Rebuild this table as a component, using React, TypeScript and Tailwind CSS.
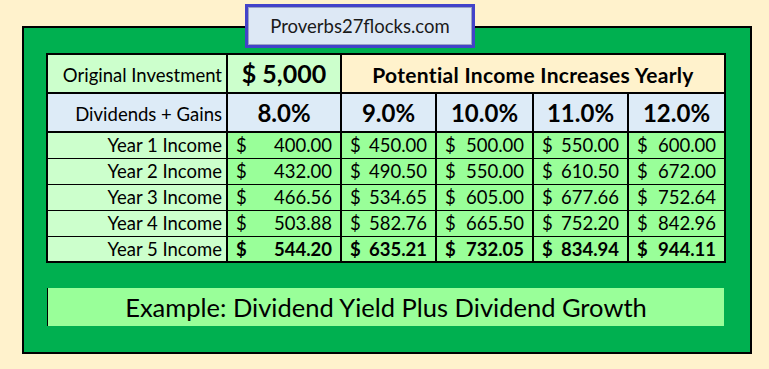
import React from 'react';

const rates = ['8.0%', '9.0%', '10.0%', '11.0%', '12.0%'];

const income = [
  ['400.00', '450.00', '500.00', '550.00', '600.00'],
  ['432.00', '490.50', '550.00', '610.50', '672.00'],
  ['466.56', '534.65', '605.00', '677.66', '752.64'],
  ['503.88', '582.76', '665.50', '752.20', '842.96'],
  ['544.20', '635.21', '732.05', '834.94', '944.11'],
];

const font = { fontFamily: 'Lato, "Liberation Sans", sans-serif' };

export default function App() {
  return (
    <div className="w-[769px] h-[369px] bg-[#fff2cc] relative overflow-hidden" style={font}>
      {/* Site title badge */}
      <div className="absolute left-[245px] top-[4px] w-[230px] h-[44px] border-[3px] border-[#4343c9] bg-[#dde8f5] z-10">
        <div className="w-full h-full border border-[#9aa3c4] flex items-center justify-center text-[18.5px] text-[#1a1a1a] pt-[1px]">
          Proverbs27flocks.com
        </div>
      </div>

      <div className="pl-[22px] pt-[26px]">
        <div className="w-[730px] h-[328px] border-2 border-black bg-[#00b050] pl-[22px] pr-[26px] pt-[25px] flex flex-col">
          <table className="table-fixed border-collapse border-2 border-black w-[678px] text-black">
            <colgroup>
              <col className="w-[180px]" />
              <col className="w-[114px]" />
              <col className="w-[95px]" />
              <col className="w-[97px]" />
              <col className="w-[95px]" />
              <col className="w-[97px]" />
            </colgroup>
            <tbody>
              <tr className="h-[39px]">
                <td className="border-2 border-black bg-[#ccffcc] text-right pr-[4px] text-[18.5px] leading-none pt-[3px]">
                  Original Investment
                </td>
                <td className="border-2 border-black bg-[#ccffcc] text-center text-[25px] font-bold leading-none">$ 5,000</td>
                <td colSpan={4} className="border-2 border-black bg-[#fff2cc] text-center text-[21px] font-bold leading-none tracking-[0.3px] pt-[2px]">
                  Potential Income Increases Yearly
                </td>
              </tr>
              <tr className="h-[39px]">
                <td className="border-2 border-black bg-[#ddebf7] text-right pr-[4px] text-[18.5px] leading-none pt-[3px]">
                  Dividends + Gains
                </td>
                {rates.map((r) => (
                  <td key={r} className="border-2 border-black bg-[#ddebf7] text-center text-[24px] font-bold leading-none">
                    {r}
                  </td>
                ))}
              </tr>
              {income.map((row, i) => (
                <tr key={i} className="h-[26px]">
                  <td className="border border-black border-r-2 bg-[#ccffcc] text-right pr-[4px] text-[18.5px] leading-none">
                    Year {i + 1} Income
                  </td>
                  {row.map((v, j) => (
                    <td
                      key={j}
                      className={`border border-black border-r-2 bg-[#99ff99] text-[18.5px] leading-none px-[8px] ${
                        i === 4 ? 'font-bold' : ''
                      }`}
                    >
                      <div className="flex justify-between">
                        <span>$</span>
                        <span>{v}</span>
                      </div>
                    </td>
                  ))}
                </tr>
              ))}
            </tbody>
          </table>

          <div className="mt-[25px] ml-[1px] h-[38px] bg-[#99ff99] border-l border-black flex items-center justify-center text-[25.5px] text-black">
            Example: Dividend Yield Plus Dividend Growth
          </div>
        </div>
      </div>
    </div>
  );
}
